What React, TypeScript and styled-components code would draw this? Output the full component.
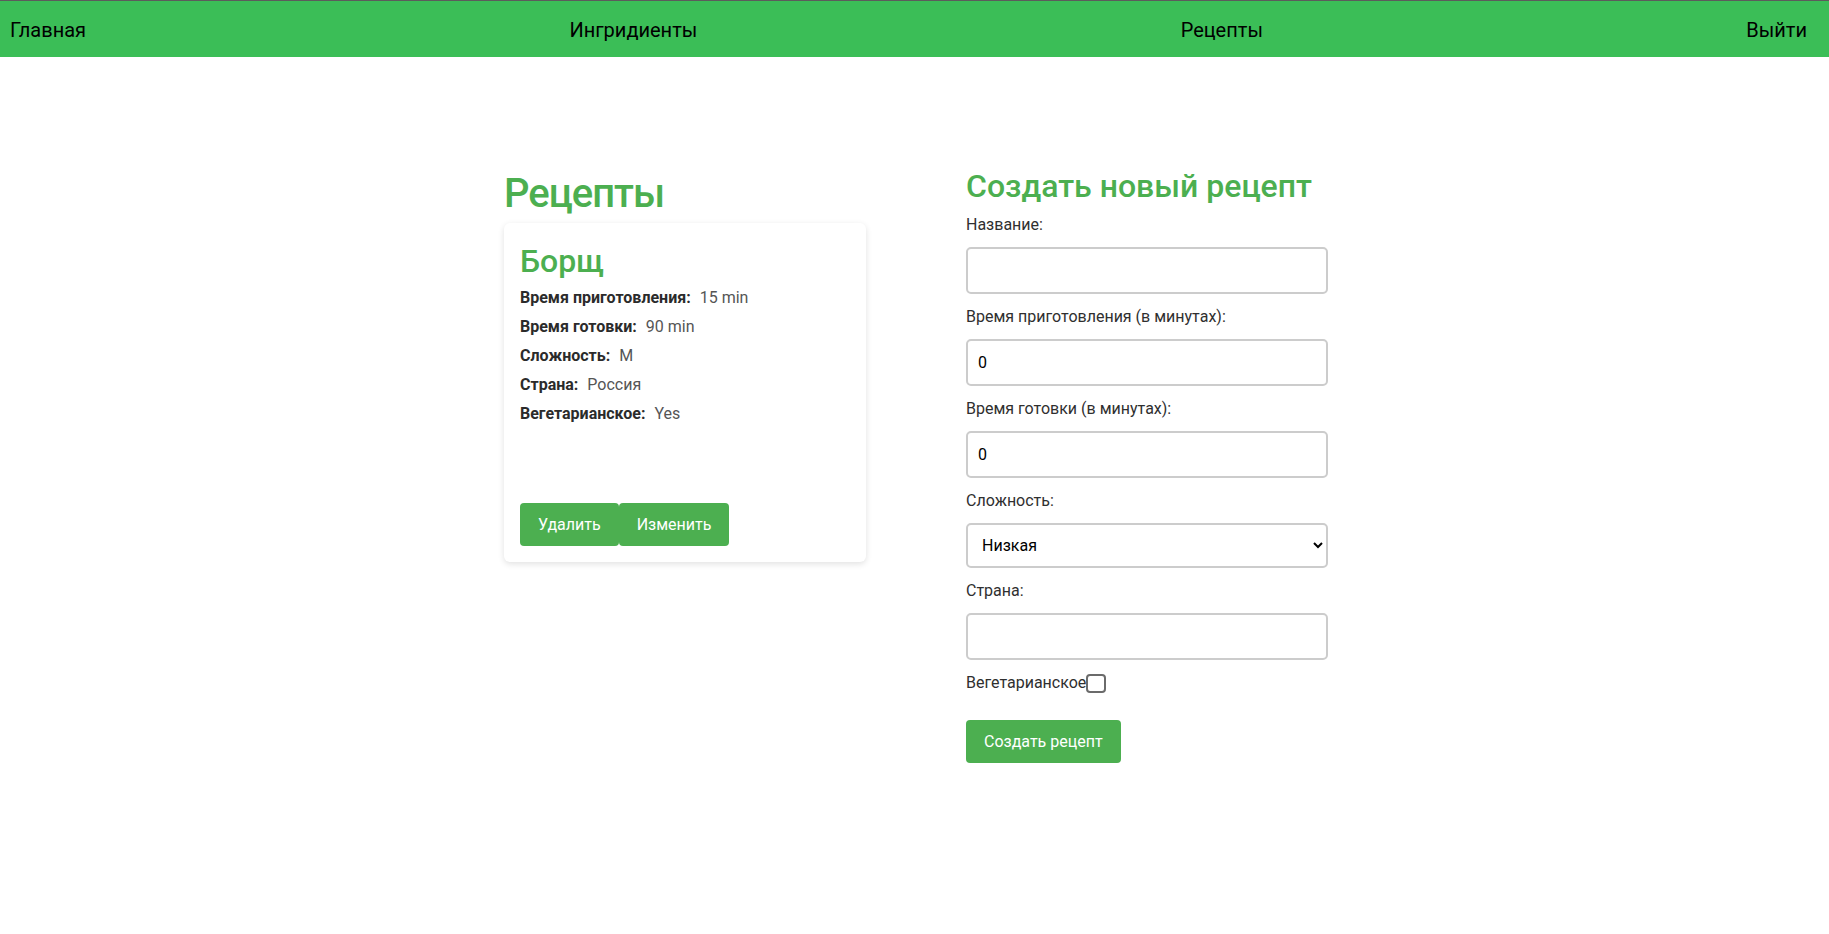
import React from "react";
import styled, { createGlobalStyle } from "styled-components";

const GlobalStyle = createGlobalStyle`
  * { box-sizing: border-box; }
  body {
    margin: 0;
    background: #ffffff;
    color: #212529;
    font-family: Roboto, "Noto Sans", "Liberation Sans", sans-serif;
    font-size: 16px;
    line-height: 1.5;
  }
`;

const NavBar = styled.nav`
  display: flex;
  justify-content: space-between;
  align-items: center;
  height: 57px;
  padding: 2px 22px 0 10px;
  border-top: 1px solid #5c5c5c;
  background: #3bbe57;
`;

const NavLink = styled.a`
  font-size: 20px;
  line-height: 24px;
  color: #000000;
  text-decoration: none;
  cursor: pointer;
`;

const Main = styled.main`
  display: flex;
  justify-content: center;
  align-items: flex-start;
  gap: 100px;
  padding: 110px 0 0 3px;
`;

const Column = styled.section`
  display: flex;
  flex-direction: column;
  width: 362px;
`;

const PageTitle = styled.h1`
  margin: 3px 0 5px;
  font-size: 40px;
  font-weight: 500;
  line-height: 1.2;
  letter-spacing: -1px;
  color: #4caf50;
`;

const Card = styled.article`
  display: flex;
  flex-direction: column;
  height: 339px;
  padding: 16px;
  border-radius: 6px;
  background: #ffffff;
  box-shadow: 0 2px 6px rgba(0, 0, 0, 0.12);
`;

const CardTitle = styled.h2`
  margin: 3px 0 6px;
  font-size: 32px;
  font-weight: 500;
  line-height: 1.2;
  color: #4caf50;
`;

const InfoRow = styled.p`
  margin: 0 0 5px;
  font-size: 16px;
  line-height: 24px;
  color: #555555;
`;

const InfoLabel = styled.strong`
  font-weight: 700;
  color: #2b2b2b;
`;

const InfoValue = styled.span`
  margin-left: 9px;
  color: #555555;
`;

const ButtonRow = styled.div`
  display: flex;
  margin-top: auto;
`;

const Button = styled.button<{ $mt?: number }>`
  align-self: flex-start;
  height: 43px;
  margin-top: ${(p) => p.$mt ?? 0}px;
  padding: 0 18px;
  border: none;
  border-radius: 4px;
  background: #4caf50;
  color: #ffffff;
  font-family: inherit;
  font-size: 16px;
  cursor: pointer;
`;

const FormTitle = styled.h2`
  margin: 0 0 8px;
  font-size: 32px;
  font-weight: 500;
  line-height: 1.2;
  color: #4caf50;
`;

const Form = styled.form`
  display: flex;
  flex-direction: column;
`;

const Label = styled.label`
  display: block;
  margin-bottom: 10px;
  font-size: 16px;
  line-height: 24px;
  color: #2f2f2f;
`;

const TextInput = styled.input`
  width: 100%;
  height: 47px;
  margin: 0 0 11px;
  padding: 0 10px;
  border: 2px solid #cccccc;
  border-radius: 5px;
  background: #ffffff;
  color: #000000;
  font-family: inherit;
  font-size: 16px;
  outline: none;
`;

const Select = styled.select`
  width: 100%;
  height: 45px;
  margin: 0 0 11px;
  padding: 0 10px;
  border: 2px solid #cccccc;
  border-radius: 5px;
  background: #ffffff;
  color: #000000;
  font-family: inherit;
  font-size: 16px;
  outline: none;
`;

const CheckRow = styled.label`
  display: flex;
  align-items: center;
  font-size: 16px;
  line-height: 24px;
  color: #2f2f2f;
`;

const CheckBox = styled.input`
  appearance: none;
  width: 20px;
  height: 19px;
  margin: 0;
  border: 2px solid #6b6b6b;
  border-radius: 4px;
  background: #ffffff;
`;

const recipe = {
  name: "Борщ",
  rows: [
    ["Время приготовления:", "15 min"],
    ["Время готовки:", "90 min"],
    ["Сложность:", "M"],
    ["Страна:", "Россия"],
    ["Вегетарианское:", "Yes"],
  ],
};

export default function App() {
  return (
    <>
      <GlobalStyle />
      <NavBar>
        <NavLink>Главная</NavLink>
        <NavLink>Ингридиенты</NavLink>
        <NavLink>Рецепты</NavLink>
        <NavLink>Выйти</NavLink>
      </NavBar>
      <Main>
        <Column>
          <PageTitle>Рецепты</PageTitle>
          <Card>
            <CardTitle>{recipe.name}</CardTitle>
            {recipe.rows.map(([k, v]) => (
              <InfoRow key={k}>
                <InfoLabel>{k}</InfoLabel>
                <InfoValue>{v}</InfoValue>
              </InfoRow>
            ))}
            <ButtonRow>
              <Button type="button">Удалить</Button>
              <Button type="button">Изменить</Button>
            </ButtonRow>
          </Card>
        </Column>
        <Column>
          <FormTitle>Создать новый рецепт</FormTitle>
          <Form onSubmit={(e) => e.preventDefault()}>
            <Label htmlFor="name">Название:</Label>
            <TextInput id="name" type="text" defaultValue="" />
            <Label htmlFor="prep">Время приготовления (в минутах):</Label>
            <TextInput id="prep" type="number" defaultValue={0} />
            <Label htmlFor="cook">Время готовки (в минутах):</Label>
            <TextInput id="cook" type="number" defaultValue={0} />
            <Label htmlFor="diff">Сложность:</Label>
            <Select id="diff" defaultValue="low">
              <option value="low">Низкая</option>
              <option value="mid">Средняя</option>
              <option value="high">Высокая</option>
            </Select>
            <Label htmlFor="country">Страна:</Label>
            <TextInput id="country" type="text" defaultValue="" />
            <CheckRow>
              Вегетарианское
              <CheckBox type="checkbox" />
            </CheckRow>
            <Button type="submit" $mt={25}>Создать рецепт</Button>
          </Form>
        </Column>
      </Main>
    </>
  );
}
